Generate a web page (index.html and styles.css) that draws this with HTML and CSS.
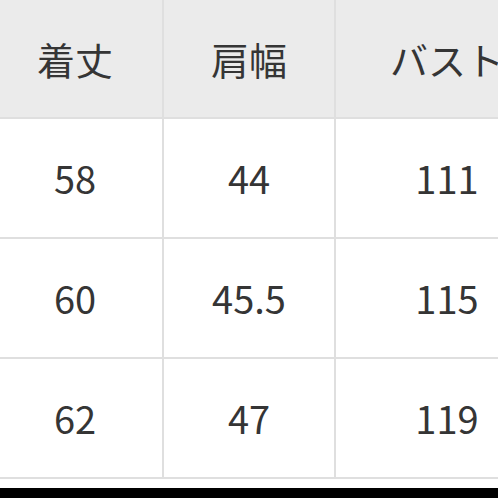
FILE: index.html
```html
<!DOCTYPE html>
<html lang="ja">
<head>
<meta charset="utf-8">
<link rel="stylesheet" href="styles.css">
</head>
<body>
<div class="page">
  <div class="grid">
    <div class="cell head">着丈</div>
    <div class="cell head">肩幅</div>
    <div class="cell head">バスト</div>
    <div class="cell">58</div>
    <div class="cell">44</div>
    <div class="cell">111</div>
    <div class="cell">60</div>
    <div class="cell">45.5</div>
    <div class="cell">115</div>
    <div class="cell">62</div>
    <div class="cell">47</div>
    <div class="cell">119</div>
  </div>
  <div class="spacer"></div>
  <div class="bar"></div>
</div>
</body>
</html>
```
FILE: styles.css
```css
html, body {
  margin: 0;
  padding: 0;
  background: #ffffff;
  overflow: hidden;
}
.page {
  width: 498px;
  height: 498px;
  overflow: hidden;
  display: flex;
  flex-direction: column;
}
.grid {
  margin-left: -12px;
  width: 570px;
  display: grid;
  grid-template-columns: 174px 170px 222px;
  grid-template-rows: 117px 118px 118px 118px;
  gap: 2px;
  background: #dfdfdf;
  border-bottom: 2px solid #dfdfdf;
}
.cell {
  background: #ffffff;
  display: flex;
  align-items: center;
  justify-content: center;
  font-family: "Noto Sans CJK JP", "Noto Sans", sans-serif;
  font-size: 38px;
  color: #353535;
  line-height: 1;
}
.head {
  background: #ebebeb;
}
.spacer {
  height: 9px;
}
.bar {
  flex: 1;
  background: #000000;
}
```
